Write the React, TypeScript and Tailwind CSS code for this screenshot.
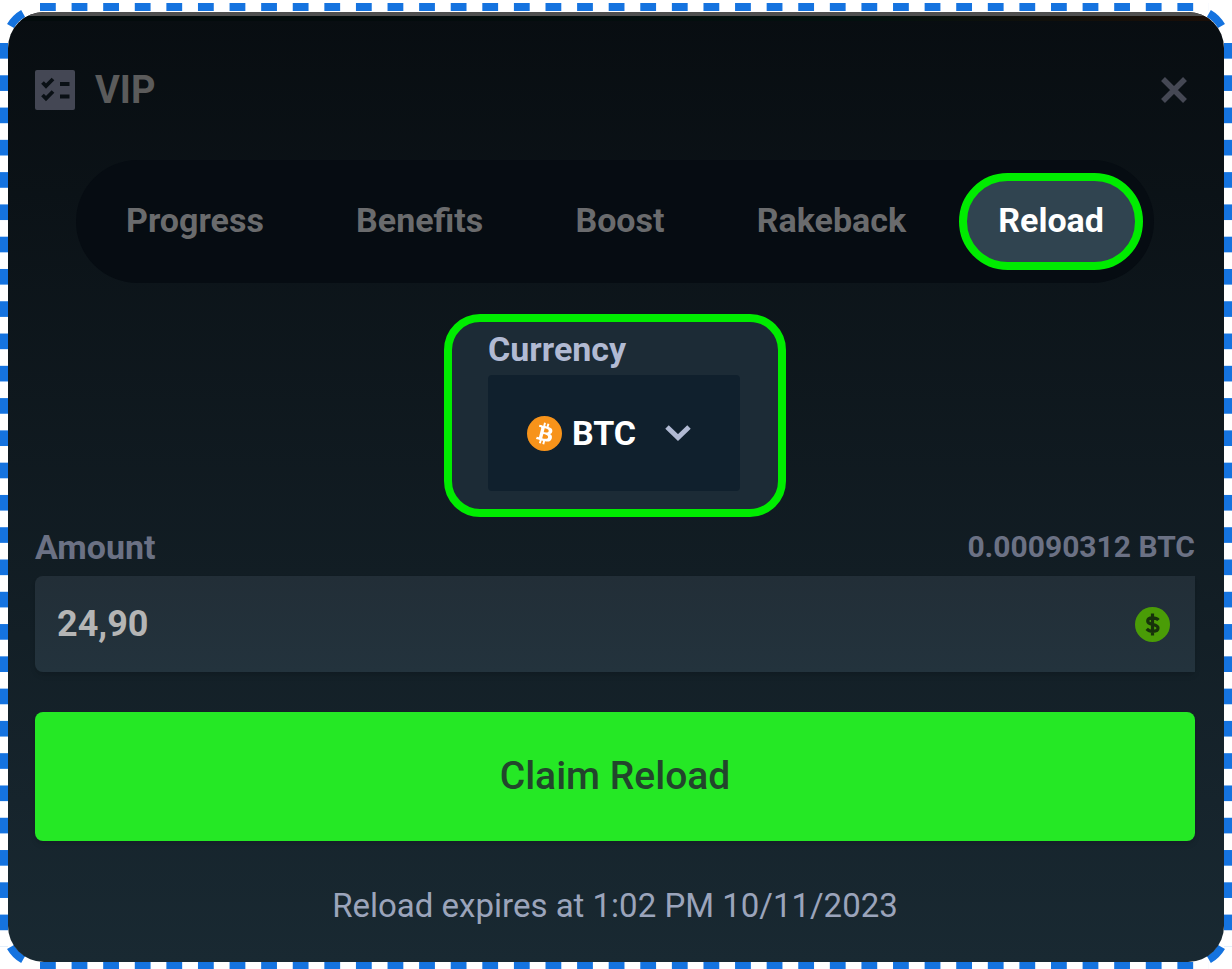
import { useState } from 'react';

const tabs = ['Progress', 'Benefits', 'Boost', 'Rakeback', 'Reload'];

function DashedFrame() {
  const horizontal =
    'absolute left-[40px] right-[23px] bg-[linear-gradient(90deg,#1573df_50%,transparent_50%)] bg-[length:32px_8px] [background-repeat:round_no-repeat]';
  const vertical =
    'absolute top-[43px] bottom-[22px] w-2 bg-[linear-gradient(180deg,#1573df_50%,transparent_50%)] bg-[length:8px_32px] [background-repeat:no-repeat_round]';
  const corners = [
    'left-0 top-[3px]',
    'right-0 top-[3px] -scale-x-100',
    'left-0 -bottom-px -scale-y-100',
    'right-0 -bottom-px -scale-100',
  ];
  return (
    <div aria-hidden="true">
      <div className={`${horizontal} top-[3px] h-2`} />
      <div className={`${horizontal} bottom-0 h-[7px]`} />
      <div className={`${vertical} left-0`} />
      <div className={`${vertical} right-0`} />
      {corners.map((place) => (
        <svg key={place} className={`absolute size-10 ${place}`} viewBox="0 0 40 40">
          <path d="M6 40A34 34 0 0 1 40 6" fill="none" stroke="#1573df" strokeWidth="8" strokeDasharray="0 17.7 18 40" />
        </svg>
      ))}
    </div>
  );
}

function ChecklistIcon() {
  return (
    <svg className="size-10" viewBox="0 0 40 40" aria-hidden="true">
      <rect width="40" height="40" rx="2" fill="#444754" />
      <g fill="none" stroke="#0a1015" strokeWidth="3.8">
        <path d="M7.500 12.500l3.500 3.500 7-7M7.500 25l3.500 3.500 7-7M25 14h9.500M25 26.500h9.500" />
      </g>
    </svg>
  );
}

function BitcoinIcon() {
  return (
    <svg className="size-[35px]" viewBox="0 0 32 32" aria-hidden="true">
      <circle cx="16" cy="16" r="16" fill="#f7931a" />
      <path
        fill="#fff"
        d="M23.189 14.02c.314-2.096-1.283-3.223-3.465-3.975l.708-2.840-1.728-.43-.69 2.765c-.454-.114-.92-.22-1.385-.326l.695-2.783L15.596 6l-.708 2.839c-.376-.086-.746-.170-1.104-.260l.002-.009-2.384-.595-.460 1.846s1.283.294 1.256.312c.700.175.826.638.805 1.006l-.806 3.235c.048.012.110.030.180.057l-.183-.045-1.130 4.532c-.086.212-.303.531-.793.410.018.025-1.256-.313-1.256-.313l-.858 1.978 2.250.561c.418.105.828.215 1.231.318l-.715 2.872 1.727.430.708-2.840c.472.127.930.245 1.378.357l-.706 2.828 1.728.430.715-2.866c2.948.558 5.164.333 6.097-2.333.752-2.146-.037-3.385-1.588-4.192 1.130-.260 1.980-1.003 2.207-2.538zm-3.950 5.538c-.533 2.147-4.148.986-5.320.695l.950-3.805c1.172.293 4.929.872 4.370 3.110zm.535-5.569c-.487 1.953-3.495.960-4.470.717l.860-3.450c.975.243 4.118.696 3.610 2.733z"
      />
    </svg>
  );
}

function DollarIcon() {
  return (
    <svg className="size-[35px]" viewBox="0 0 35 35" aria-hidden="true">
      <circle cx="17.5" cy="17.5" r="17.5" fill="#4a9c07" />
      <path
        d="M23.500 13C22 11.300 19.800 10.800 17.500 10.800c-2.800 0-4.800 1.100-4.800 3.200 0 4.800 10.300 2.300 10.300 7 0 2.300-2.300 3.300-5.200 3.300-2.600 0-4.600-.8-6.100-2.400M17.500 6.500v22"
        fill="none"
        stroke="#17320b"
        strokeWidth="3.200"
      />
    </svg>
  );
}

export default function App() {
  const [active, setActive] = useState('Reload');
  const [currency, setCurrency] = useState('BTC');
  const [amount, setAmount] = useState('24,90');

  return (
    <div className="relative bg-white px-2 pt-3 pb-[7px] font-['Roboto','Liberation_Sans',sans-serif]">
      <DashedFrame />
      <main className="relative overflow-hidden rounded-[36px] bg-linear-to-b from-[#080d11] to-[#192932] pb-8">
        <div className="h-1 bg-[#4f4f4f]" />
        <div className="h-[5px] bg-linear-to-r from-[#030b0c] from-30% via-[#03110f] via-70% to-[#1b0e07]" />

        <div className="pr-[29px] pl-[27px]">
          <header className="mt-[49px] flex h-10 items-center justify-between">
            <h1 className="flex items-center gap-5 text-[38px] font-bold leading-10 text-[#5b5b5b]">
              <ChecklistIcon />
              VIP
            </h1>
            <button type="button" aria-label="Close" className="mr-[3px] p-1">
              <svg className="size-7" viewBox="0 0 28 28" aria-hidden="true">
                <path d="M3 3l22 22M25 3L3 25" fill="none" stroke="#454854" strokeWidth="5.500" />
              </svg>
            </button>
          </header>

          <nav className="mx-[41px] mt-[50px] flex justify-between rounded-full bg-[#060c12] px-[11px] py-[13px]">
            {tabs.map((tab) => (
              <button
                key={tab}
                type="button"
                aria-pressed={active === tab}
                onClick={() => setActive(tab)}
                className={`h-[97px] rounded-full border-8 px-[31px] pb-[3px] text-[34px] font-bold ${
                  active === tab ? 'border-[#00ec00] bg-[#304450] text-white' : 'border-transparent text-[#6a6b6d]'
                }`}
              >
                {tab}
              </button>
            ))}
          </nav>

          <div className="mx-auto mt-[31px] w-[342px] rounded-[36px] border-8 border-[#00ec00] bg-[#1c2b36] pr-[38px] pl-9 pt-[7px] pb-[18px]">
            <label htmlFor="currency" className="mb-[6px] block text-[34px] font-bold leading-10 text-[#b1bad3]">
              Currency
            </label>
            <div className="relative">
              <select
                id="currency"
                value={currency}
                onChange={(e) => setCurrency(e.target.value)}
                className="h-[116px] w-full appearance-none rounded bg-[#10202d] pl-[84px] text-[34px] font-bold text-white"
              >
                <option>BTC</option>
              </select>
              <span className="pointer-events-none absolute inset-y-0 left-[39px] flex items-center">
                <BitcoinIcon />
              </span>
              <span className="pointer-events-none absolute inset-y-0 right-12 flex items-center">
                <svg className="h-4 w-7" viewBox="0 0 28 16" aria-hidden="true">
                  <path d="M3 2l11 10.500L25 2" fill="none" stroke="#b1bad3" strokeWidth="5" />
                </svg>
              </span>
            </div>
          </div>

          <div className="mt-[10px] mb-[9px] flex h-10 items-center justify-between font-bold text-[#6b7184]">
            <label htmlFor="amount" className="text-[34px] leading-10">
              Amount
            </label>
            <span className="text-[30px] leading-10">0.00090312 BTC</span>
          </div>
          <div className="flex h-24 items-center rounded-l-lg bg-linear-to-b from-[#222e37] to-[#23333d] pr-[25px] shadow-md">
            <input
              id="amount"
              value={amount}
              onChange={(e) => setAmount(e.target.value)}
              className="h-full min-w-0 flex-1 bg-transparent pl-[22px] text-[36px] font-bold text-[#b5b5b5] outline-none"
            />
            <DollarIcon />
          </div>

          <button
            type="button"
            className="mt-10 h-[129px] w-full rounded-lg bg-[#25e825] text-[39px] font-medium text-[#22452c] shadow-md"
          >
            Claim Reload
          </button>

          <p className="mt-[41px] text-center text-[33px] leading-[48px] text-[#9ba4bb]">
            Reload expires at 1:02 PM 10/11/2023
          </p>
        </div>
      </main>
    </div>
  );
}
